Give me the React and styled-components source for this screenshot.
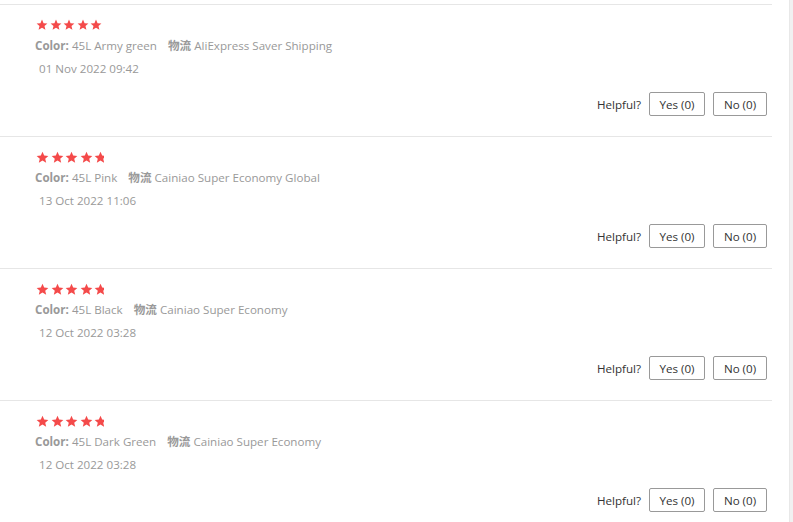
import React from "react";
import styled, { createGlobalStyle } from "styled-components";

const Global = createGlobalStyle`
  html, body { margin: 0; padding: 0; background: #fff; }
  body { font-family: "Open Sans", "Noto Sans CJK SC", sans-serif; }
`;

const Page = styled.div`
  display: flex;
  width: 793px;
  height: 522px;
  overflow: hidden;
`;

const List = styled.div`
  width: 772px;
  flex: none;
  padding-top: 4px;
`;

const Gutter = styled.div`
  flex: 1;
  display: flex;
  justify-content: flex-end;
`;

const Track = styled.div`
  width: 3px;
  background: #f1f1f1;
  border-left: 1px solid #e8e8e8;
`;

const Review = styled.div`
  box-sizing: border-box;
  height: 132px;
  border-top: 1px solid #e6e6e6;
  padding: 14px 5px 0 35px;
  display: flex;
  flex-direction: column;
`;

const Stars = styled.div`
  display: flex;
  align-items: center;
  gap: ${(p) => p.$gap}px;
  height: 12px;
  padding-left: 1px;
`;

const StarBox = styled.span`
  display: block;
  width: ${(p) => p.$w}px;
  height: ${(p) => p.$s}px;
  overflow: hidden;
  flex: none;
  svg { display: block; flex: none; }
`;

const Meta = styled.div`
  margin-top: 6px;
  font-size: 11.6px;
  line-height: 18px;
  color: #999;
  white-space: nowrap;
`;

const Label = styled.b`
  font-weight: 700;
  color: #999;
`;

const Gap = styled.span`
  display: inline-block;
  width: 11px;
`;

const DateLine = styled.div`
  margin-top: 5px;
  padding-left: 4px;
  font-size: 11.6px;
  line-height: 18px;
  color: #999;
`;

const Actions = styled.div`
  margin-top: 13px;
  display: flex;
  justify-content: flex-end;
  align-items: center;
  gap: 8px;
  color: #333;
`;

const Helpful = styled.span`
  line-height: 24px;
  margin-top: 2px;
  font-size: 11.6px;
`;

const Btn = styled.button`
  box-sizing: border-box;
  height: 24px;
  padding: 0 8px;
  border: 1px solid #999;
  border-radius: 2px;
  background: #fff;
  font-family: "Open Sans", sans-serif;
  font-size: 11.6px;
  color: #333;
  cursor: pointer;
  min-width: ${(p) => p.$min || 0}px;
`;

const Star = ({ size }) => (
  <svg width={size} height={size} viewBox="0 0 24 24">
    <path
      fill="#f44a4a"
      d="M12 1.2l3.1 7.1 7.7.7-5.8 5.1 1.8 7.6L12 17.7l-6.8 4 1.8-7.6-5.8-5.1 7.7-.7z"
    />
  </svg>
);

const StarRow = ({ size, gap, last }) => (
  <Stars $gap={gap}>
    {[size, size, size, size, last].map((w, i) => (
      <StarBox key={i} $w={w} $s={size}>
        <Star size={size} />
      </StarBox>
    ))}
  </Stars>
);

const reviews = [
  { color: "45L Army green", ship: "AliExpress Saver Shipping", date: "01 Nov 2022 09:42", size: 12, gap: 1.5, last: 12 },
  { color: "45L Pink", ship: "Cainiao Super Economy Global", date: "13 Oct 2022 11:06", size: 13, gap: 1.5, last: 10 },
  { color: "45L Black", ship: "Cainiao Super Economy", date: "12 Oct 2022 03:28", size: 13, gap: 1.5, last: 10 },
  { color: "45L Dark Green", ship: "Cainiao Super Economy", date: "12 Oct 2022 03:28", size: 13, gap: 1.5, last: 10 },
];

export default function App() {
  return (
    <>
      <Global />
      <Page>
        <List>
          {reviews.map((r, i) => (
            <Review key={i}>
              <StarRow size={r.size} gap={r.gap} last={r.last} />
              <Meta>
                <Label>Color:</Label> {r.color}
                <Gap />
                <Label>物流</Label> {r.ship}
              </Meta>
              <DateLine>{r.date}</DateLine>
              <Actions>
                <Helpful>Helpful?</Helpful>
                <Btn $min={56}>Yes (0)</Btn>
                <Btn $min={54}>No (0)</Btn>
              </Actions>
            </Review>
          ))}
        </List>
        <Gutter>
          <Track />
        </Gutter>
      </Page>
    </>
  );
}
